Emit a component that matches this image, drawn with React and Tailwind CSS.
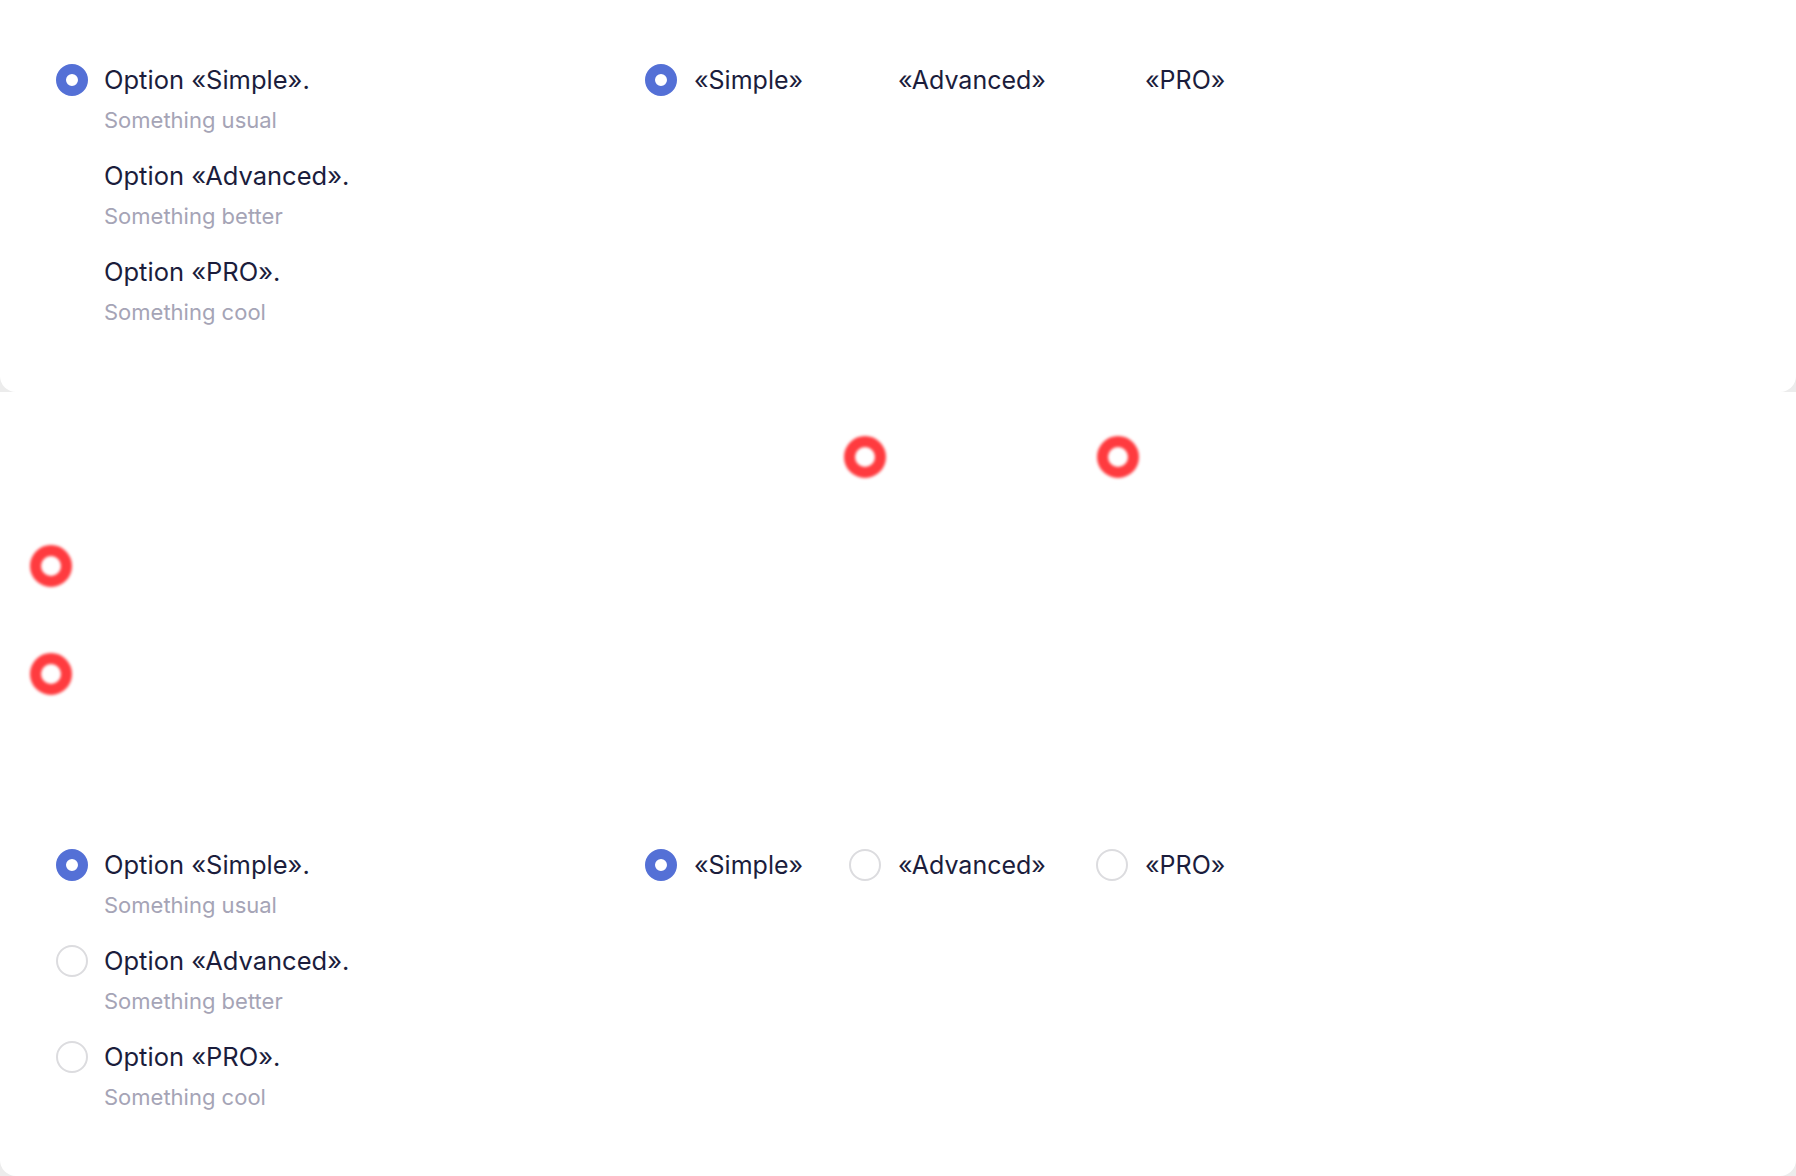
import React, { useState } from 'react';

const options = [
    { id: 'simple', label: 'Simple', hint: 'Something usual' },
    { id: 'advanced', label: 'Advanced', hint: 'Something better' },
    { id: 'pro', label: 'PRO', hint: 'Something cool' }
];

// widths of the inline items, radio + label + gap to the next one
const inlineWidths = ['w-[204px]', 'w-[247px]', 'w-[160px]'];

function Radio({ checked, hidden }) {
    if (hidden) return <span className="w-8 h-8 shrink-0" />;
    return checked ? (
        <span className="w-8 h-8 shrink-0 rounded-full border-[10px] border-[#5470d6] bg-white" />
    ) : (
        <span className="w-8 h-8 shrink-0 rounded-full border-2 border-[#dcdcdf] bg-white" />
    );
}

function StackedGroup({ value, onChange, bare }) {
    return (
        <div className="flex flex-col gap-[26px] w-[589px] shrink-0">
            {options.map((o) => (
                <div key={o.id} className="flex flex-col gap-[10px] cursor-pointer" onClick={() => onChange(o.id)}>
                    <div className="flex items-center gap-4">
                        <Radio checked={value === o.id} hidden={bare && value !== o.id} />
                        <span className="text-[25.5px] leading-8 text-[#1b1d3c]">Option «{o.label}».</span>
                    </div>
                    <span className="pl-12 text-[22px] leading-7 text-[#a5a4b6]">{o.hint}</span>
                </div>
            ))}
        </div>
    );
}

function InlineGroup({ value, onChange, bare }) {
    return (
        <div className="flex items-center">
            {options.map((o, i) => (
                <div
                    key={o.id}
                    className={`flex items-center gap-[17px] cursor-pointer ${inlineWidths[i]}`}
                    onClick={() => onChange(o.id)}
                >
                    <Radio checked={value === o.id} hidden={bare && value !== o.id} />
                    <span className="text-[25px] leading-8 text-[#1b1d3c]">«{o.label}»</span>
                </div>
            ))}
        </div>
    );
}

function Ring() {
    return <span className="block w-[42px] h-[42px] rounded-full border-[11px] border-[#ff3b3f] blur-[1.5px]" />;
}

export default function App() {
    const [top, setTop] = useState('simple');
    const [topInline, setTopInline] = useState('simple');
    const [bottom, setBottom] = useState('simple');
    const [bottomInline, setBottomInline] = useState('simple');

    return (
        <div className="min-h-screen bg-[#ececec]" style={{ fontFamily: 'Inter, "Noto Sans", sans-serif' }}>
            {/* Top card */}
            <section className="bg-white rounded-b-2xl pt-16 pb-[66px] pl-14 flex items-start h-[392px]">
                <StackedGroup value={top} onChange={setTop} bare />
                <InlineGroup value={topInline} onChange={setTopInline} bare />
            </section>

            {/* Bottom card */}
            <section className="bg-white rounded-b-2xl h-[784px] flex flex-col">
                {/* focus markers */}
                <div className="pt-[44px] pl-[844px] flex gap-[211px]">
                    <Ring />
                    <Ring />
                </div>
                <div className="pl-[30px] pt-[67px] flex flex-col gap-[66px]">
                    <Ring />
                    <Ring />
                </div>

                <div className="mt-[154px] pl-14 flex items-start">
                    <StackedGroup value={bottom} onChange={setBottom} />
                    <InlineGroup value={bottomInline} onChange={setBottomInline} />
                </div>
            </section>
        </div>
    );
}
